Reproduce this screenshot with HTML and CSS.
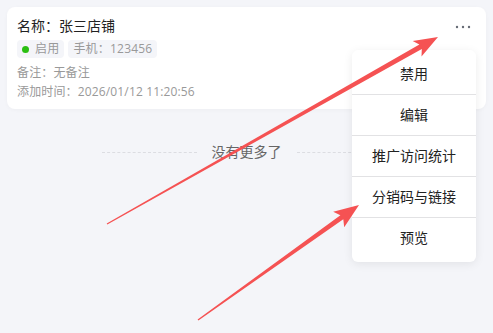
FILE: index.html
```html
<!DOCTYPE html>
<html lang="zh">
<head>
<meta charset="utf-8">
<title>店铺</title>
<link rel="stylesheet" href="styles.css">
</head>
<body>
<div class="page">
  <div class="card">
    <div class="card-head">
      <div class="title">名称：张三店铺</div>
      <svg class="more" width="16" height="4" viewBox="0 0 16 4"><circle cx="2" cy="2" r="1.2"/><circle cx="8" cy="2" r="1.2"/><circle cx="14" cy="2" r="1.2"/></svg>
    </div>
    <div class="tags">
      <span class="tag"><span class="dot"></span>启用</span>
      <span class="tag">手机：123456</span>
    </div>
    <div class="meta">备注：无备注</div>
    <div class="meta">添加时间：2026/01/12 11:20:56</div>
  </div>
  <div class="nomore"><span class="line"></span><span class="nomore-text">没有更多了</span><span class="line"></span></div>

  <div class="menu">
    <div class="menu-item">禁用</div>
    <div class="menu-item">编辑</div>
    <div class="menu-item">推广访问统计</div>
    <div class="menu-item">分销码与链接</div>
    <div class="menu-item">预览</div>
  </div>

  <svg class="arrows" width="493" height="333" viewBox="0 0 493 333">
    <polygon points="106.7,223.4 419.4,44.6 412.7,41.0 438,37 421.5,56.6 421.8,49.0 107.3,224.6"/>
    <polygon points="197.6,319.4 340.4,215.2 333.2,211.8 359,205 344.2,227.2 343.3,219.2 198.4,320.6"/>
  </svg>
</div>
</body>
</html>
```

FILE: styles.css
```css
html, body {
  margin: 0;
  padding: 0;
  background: #f4f5f9;
}
body {
  font-family: "Open Sans", "Noto Sans CJK SC", sans-serif;
  width: 493px;
  height: 333px;
  overflow: hidden;
}
.page {
  position: relative;
  width: 493px;
  height: 333px;
  padding: 7px;
  box-sizing: border-box;
}
.card {
  background: #fff;
  border-radius: 8px;
  padding: 9px 15px 8px 10px;
  box-shadow: 0 1px 4px rgba(0, 0, 0, 0.03);
}
.card-head {
  display: flex;
  justify-content: space-between;
  align-items: center;
  height: 20px;
}
.title {
  font-size: 14px;
  line-height: 20px;
  color: #222;
}
.more {
  fill: #666b75;
  margin-top: 1px;
}
.tags {
  display: flex;
  gap: 4px;
  margin-top: 4px;
}
.tag {
  display: inline-flex;
  align-items: center;
  height: 18px;
  padding: 0 5px 0 5px;
  border-radius: 4px;
  background: #f4f5f9;
  color: #999;
  font-size: 12px;
  line-height: 18px;
  letter-spacing: 0.2px;
}
.dot {
  width: 7px;
  height: 7px;
  border-radius: 50%;
  background: #2bbf12;
  margin-right: 6px;
}
.meta {
  font-size: 12px;
  line-height: 19px;
  color: #999;
  letter-spacing: 0.15px;
}
.tags + .meta {
  margin-top: 5px;
}
.nomore {
  display: flex;
  align-items: center;
  width: 290px;
  margin: 33px auto 0;
}
.line {
  flex: 1;
  border-top: 1px dashed #dcdde2;
}
.nomore-text {
  padding: 0 15px;
  font-size: 14px;
  line-height: 20px;
  color: #666;
}
.menu {
  position: absolute;
  left: 352px;
  top: 50px;
  width: 124px;
  padding: 4px 0;
  background: #fff;
  border-radius: 6px;
  box-shadow: 0 2px 10px rgba(0, 0, 0, 0.08);
}
.menu-item {
  height: 40px;
  line-height: 40px;
  text-align: center;
  font-size: 14px;
  color: #222;
  border-bottom: 1px solid #e2e2e4;
}
.menu-item:last-child {
  border-bottom: none;
}
.arrows {
  position: absolute;
  left: 0;
  top: 0;
  pointer-events: none;
}
.arrows polygon {
  fill: #f55253;
}
```
